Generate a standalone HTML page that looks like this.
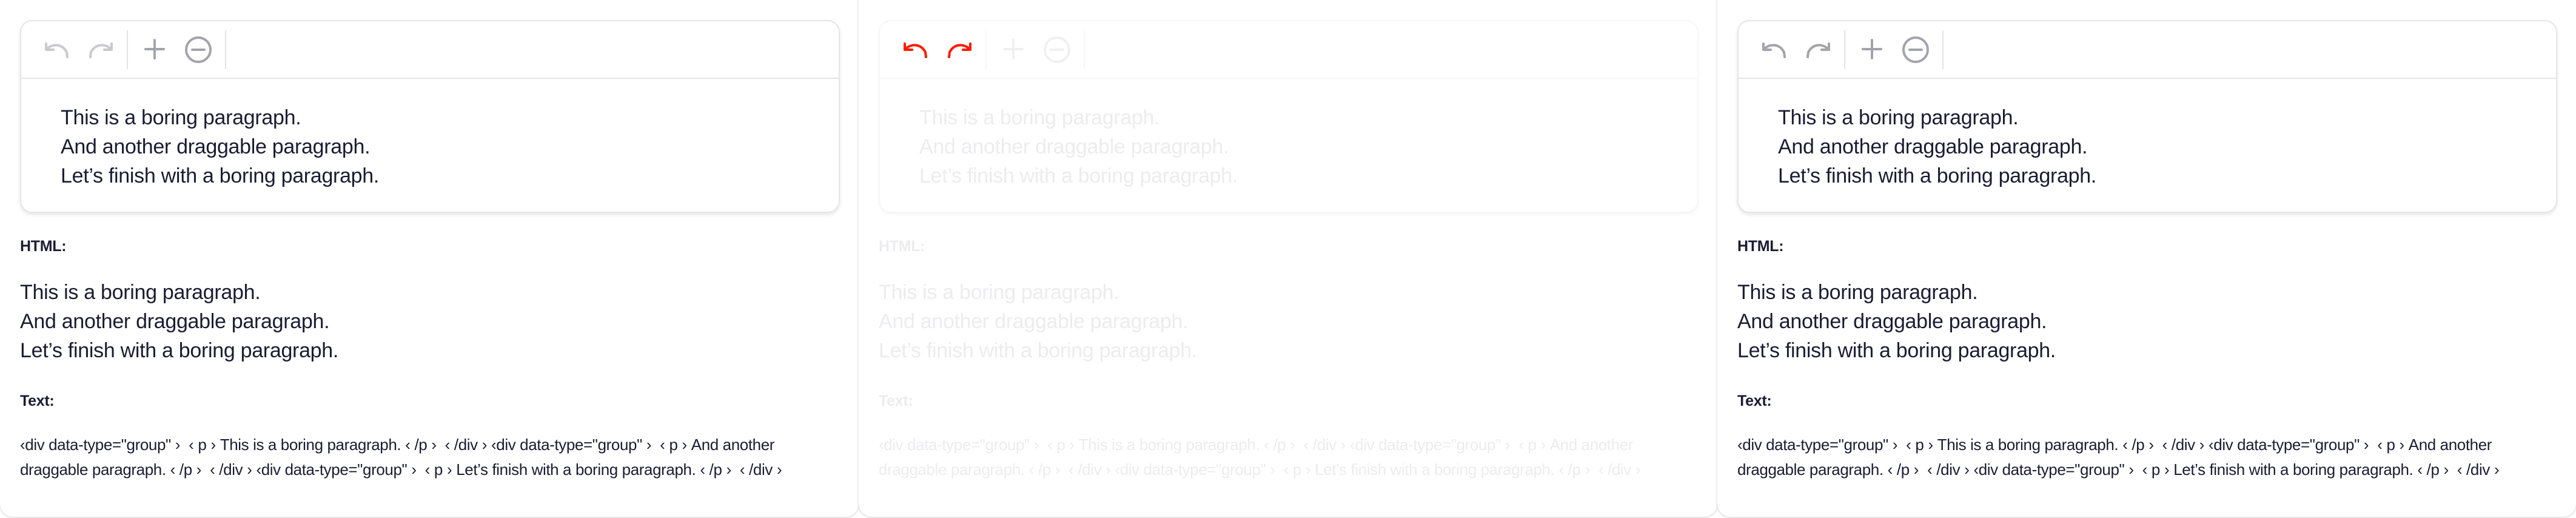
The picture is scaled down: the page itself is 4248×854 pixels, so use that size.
<!DOCTYPE html>
<html><head><meta charset="utf-8"><style>
*{margin:0;padding:0;box-sizing:border-box}
body{width:4248px;height:854px;background:#fff;overflow:hidden;position:relative;font-family:"Liberation Sans",sans-serif;color:#1b1b33}
.panel{position:absolute;top:-40px;width:1416px;height:892px;background:#fff;border-radius:22px;box-shadow:0 1px 4px rgba(0,0,0,.18)}
.inner{position:absolute;left:0;top:40px;width:1416px;height:854px}
.card{position:absolute;left:33px;top:33px;width:1352px;height:318px;border:2px solid #e6e6e9;border-radius:20px;box-shadow:0 3px 6px rgba(0,0,0,.10);background:#fff}
.tb{position:absolute;left:0;top:0;width:100%;height:95px;border-bottom:2px solid #e4e4e7}
.sep{position:absolute;top:15px;width:2px;height:64px;background:#e4e4e7}
.ed{position:absolute;left:65px;top:135px;font-size:34px;line-height:48px;letter-spacing:-.3px}
.lbl{position:absolute;left:33px;font-weight:bold;font-size:25px;letter-spacing:-.3px}
.html{position:absolute;left:33px;top:458px;font-size:34px;line-height:48px;letter-spacing:-.3px}
.code{position:absolute;left:33px;top:713px;width:1360px;font-size:26px;line-height:41px;letter-spacing:-.4px}
.code b{font-weight:normal;padding:0 7px}
svg{position:absolute}
.fade .fc{opacity:.08}
</style></head><body>

<div class="panel" style="left:0"><div class="inner">
<div class="card"><div class="tb">
<svg style="left:37px;top:33px" width="44" height="30" viewBox="0 0 44 30"><path d="M4 4v10h12M5 13C14 4 30 3 38 18l1 8" fill="none" stroke="#c9c9d0" stroke-width="4" stroke-linecap="round" stroke-linejoin="round"/></svg>
<svg style="left:109px;top:33px" width="44" height="30" viewBox="0 0 44 30"><path d="M40 4v10H28M39 13C30 4 14 3 6 18l-1 8" fill="none" stroke="#c9c9d0" stroke-width="4" stroke-linecap="round" stroke-linejoin="round"/></svg>
<div class="sep" style="left:174px"></div>
<svg style="left:203px;top:29px" width="34" height="34" viewBox="0 0 34 34"><path d="M17 2v30M2 17h30" stroke="#a3a3ad" stroke-width="4" stroke-linecap="round"/></svg>
<svg style="left:269px;top:24px" width="46" height="46" viewBox="0 0 46 46"><circle cx="23" cy="23" r="20" fill="none" stroke="#a3a3ad" stroke-width="4"/><path d="M13 23h20" stroke="#a3a3ad" stroke-width="4" stroke-linecap="round"/></svg>
<div class="sep" style="left:336px"></div>
</div>
<div class="ed">This is a boring paragraph.<br>And another draggable paragraph.<br>Let’s finish with a boring paragraph.</div></div>
<div class="lbl" style="top:392px">HTML:</div>
<div class="html">This is a boring paragraph.<br>And another draggable paragraph.<br>Let’s finish with a boring paragraph.</div>
<div class="lbl" style="top:647px">Text:</div>
<div class="code">‹div data-type="group"<b>›</b><b>‹</b>p<b>›</b>This is a boring paragraph.<b>‹</b>/p<b>›</b><b>‹</b>/div<b>›</b>‹div data-type="group"<b>›</b><b>‹</b>p<b>›</b>And another draggable paragraph.<b>‹</b>/p<b>›</b><b>‹</b>/div<b>›</b>‹div data-type="group"<b>›</b><b>‹</b>p<b>›</b>Let’s finish with a boring paragraph.<b>‹</b>/p<b>›</b><b>‹</b>/div<b>›</b></div>
</div></div>

<div class="panel fade" style="left:1416px"><div class="inner">
<div class="card fc" style="opacity:.35"></div>
<div class="card" style="border-color:transparent;box-shadow:none;background:none"><div class="tb" style="border-color:#f6f6f7">
<svg style="left:37px;top:33px" width="44" height="30" viewBox="0 0 44 30"><path d="M4 4v10h12M5 13C14 4 30 3 38 18l1 8" fill="none" stroke="#ff1a00" stroke-width="4" stroke-linecap="round" stroke-linejoin="round"/></svg>
<svg style="left:109px;top:33px" width="44" height="30" viewBox="0 0 44 30"><path d="M40 4v10H28M39 13C30 4 14 3 6 18l-1 8" fill="none" stroke="#ff1a00" stroke-width="4" stroke-linecap="round" stroke-linejoin="round"/></svg>
<div class="sep" style="left:174px;background:#f6f6f7"></div>
<svg style="left:203px;top:29px;opacity:.15" width="34" height="34" viewBox="0 0 34 34"><path d="M17 2v30M2 17h30" stroke="#a3a3ad" stroke-width="4" stroke-linecap="round"/></svg>
<svg style="left:269px;top:24px;opacity:.15" width="46" height="46" viewBox="0 0 46 46"><circle cx="23" cy="23" r="20" fill="none" stroke="#a3a3ad" stroke-width="4"/><path d="M13 23h20" stroke="#a3a3ad" stroke-width="4" stroke-linecap="round"/></svg>
<div class="sep" style="left:336px;background:#f6f6f7"></div>
</div>
<div class="ed fc">This is a boring paragraph.<br>And another draggable paragraph.<br>Let’s finish with a boring paragraph.</div></div>
<div class="lbl fc" style="top:392px">HTML:</div>
<div class="html fc">This is a boring paragraph.<br>And another draggable paragraph.<br>Let’s finish with a boring paragraph.</div>
<div class="lbl fc" style="top:647px">Text:</div>
<div class="code fc">‹div data-type="group"<b>›</b><b>‹</b>p<b>›</b>This is a boring paragraph.<b>‹</b>/p<b>›</b><b>‹</b>/div<b>›</b>‹div data-type="group"<b>›</b><b>‹</b>p<b>›</b>And another draggable paragraph.<b>‹</b>/p<b>›</b><b>‹</b>/div<b>›</b>‹div data-type="group"<b>›</b><b>‹</b>p<b>›</b>Let’s finish with a boring paragraph.<b>‹</b>/p<b>›</b><b>‹</b>/div<b>›</b></div>
</div></div>

<div class="panel" style="left:2832px"><div class="inner">
<div class="card"><div class="tb">
<svg style="left:37px;top:33px" width="44" height="30" viewBox="0 0 44 30"><path d="M4 4v10h12M5 13C14 4 30 3 38 18l1 8" fill="none" stroke="#a3a3ad" stroke-width="4" stroke-linecap="round" stroke-linejoin="round"/></svg>
<svg style="left:109px;top:33px" width="44" height="30" viewBox="0 0 44 30"><path d="M40 4v10H28M39 13C30 4 14 3 6 18l-1 8" fill="none" stroke="#a3a3ad" stroke-width="4" stroke-linecap="round" stroke-linejoin="round"/></svg>
<div class="sep" style="left:174px"></div>
<svg style="left:203px;top:29px" width="34" height="34" viewBox="0 0 34 34"><path d="M17 2v30M2 17h30" stroke="#a3a3ad" stroke-width="4" stroke-linecap="round"/></svg>
<svg style="left:269px;top:24px" width="46" height="46" viewBox="0 0 46 46"><circle cx="23" cy="23" r="20" fill="none" stroke="#a3a3ad" stroke-width="4"/><path d="M13 23h20" stroke="#a3a3ad" stroke-width="4" stroke-linecap="round"/></svg>
<div class="sep" style="left:336px"></div>
</div>
<div class="ed">This is a boring paragraph.<br>And another draggable paragraph.<br>Let’s finish with a boring paragraph.</div></div>
<div class="lbl" style="top:392px">HTML:</div>
<div class="html">This is a boring paragraph.<br>And another draggable paragraph.<br>Let’s finish with a boring paragraph.</div>
<div class="lbl" style="top:647px">Text:</div>
<div class="code">‹div data-type="group"<b>›</b><b>‹</b>p<b>›</b>This is a boring paragraph.<b>‹</b>/p<b>›</b><b>‹</b>/div<b>›</b>‹div data-type="group"<b>›</b><b>‹</b>p<b>›</b>And another draggable paragraph.<b>‹</b>/p<b>›</b><b>‹</b>/div<b>›</b>‹div data-type="group"<b>›</b><b>‹</b>p<b>›</b>Let’s finish with a boring paragraph.<b>‹</b>/p<b>›</b><b>‹</b>/div<b>›</b></div>
</div></div>
</body></html>
